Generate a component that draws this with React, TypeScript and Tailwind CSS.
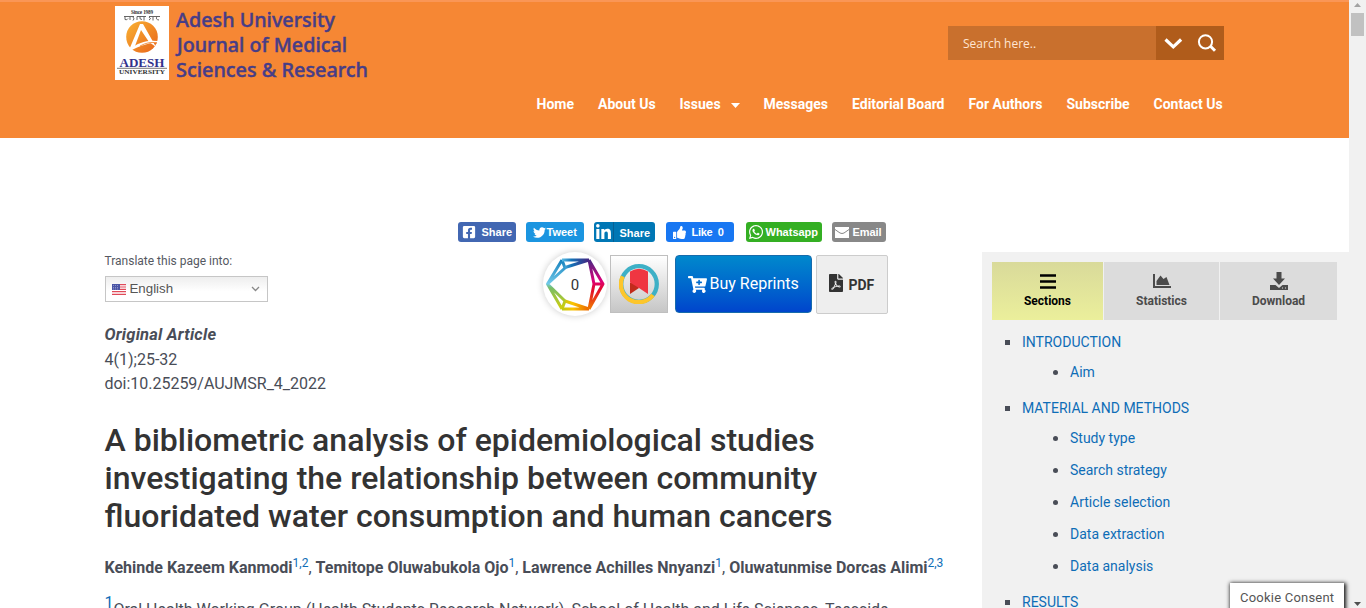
import React from "react";
import { FaCartPlus, FaFilePdf, FaThumbsUp, FaTwitter, FaWhatsapp, FaLinkedinIn, FaFacebookSquare } from "react-icons/fa";

const NAV = [
  { label: "Home", width: "w-[61.5px]" },
  { label: "About Us", width: "w-[81.5px]" },
  { label: "Issues", width: "w-[84px]", caret: true },
  { label: "Messages", width: "w-[88.5px]" },
  { label: "Editorial Board", width: "w-[116.5px]" },
  { label: "For Authors", width: "w-[98px]" },
  { label: "Subscribe", width: "w-[87px]" },
  { label: "Contact Us", width: "w-[70.5px]" },
];

function Crest() {
  return (
    <div className="h-[74px] w-[54px] shrink-0 bg-white">
      <svg width="54" height="74" viewBox="0 0 54 74">
        <defs>
          <linearGradient id="sun" x1="0" y1="0" x2="1" y2="1">
            <stop offset="0" stopColor="#f9b233" />
            <stop offset="1" stopColor="#e8641b" />
          </linearGradient>
        </defs>
        <text x="27" y="7.6" textAnchor="middle" fontSize="5.2" fontWeight="bold" fontFamily="Liberation Serif, serif" fill="#333" textLength="22">Since 1989</text>
        <path d="M9 10.500h10M22 10.500h9M34 10.500h11M10 10.500v3q2 1 3-1M15 11v3M18 11q2 2 0 3.500M22 10.500v3.500M25 10.500q-1 3 2 3M29 10.500v4M34 11q3 2 0 3M38 11v3.500M42 10.500q-2 3 2 3.500" stroke="#555" strokeWidth=".9" fill="none" />
        <circle cx="27" cy="31" r="15.8" fill="url(#sun)" />
        <path d="M14 44 25 18h3L41 41 34 36 26 24 20 40Z" fill="#fff" />
        <path d="M15 43C24 36 35 33 47 36 35 36 24 40 15 45Z" fill="#fff" />
        <path d="M25 40q9-5 17-3" stroke="#ef7e25" strokeWidth=".8" fill="none" />
        <text x="27" y="61" textAnchor="middle" fontSize="12" fontWeight="bold" fontFamily="Liberation Serif, serif" fill="#33318c" textLength="45" lengthAdjust="spacingAndGlyphs">ADESH</text>
        <path d="M2 62.3h50" stroke="#555" strokeWidth=".8" />
        <text x="27" y="68.300" textAnchor="middle" fontSize="6.4" fontWeight="bold" fontFamily="Liberation Serif, serif" fill="#333" textLength="46" lengthAdjust="spacingAndGlyphs">UNIVERSITY</text>
      </svg>
    </div>
  );
}

function Header() {
  return (
    <header className="flex h-[138px] justify-between border-t-2 border-[#fa9656] bg-[#f68734] pl-[115px] pr-[125px]">
      <div className="flex gap-[7px] pt-1">
        <Crest />
        <svg className="overflow-visible" width="196" height="78" viewBox="0 0 196 78" fontFamily="Noto Sans, sans-serif" fontSize="20.5" fontWeight="500" fill="#473d87" stroke="#473d87" strokeWidth=".45">
          <text x="0" y="20.500" textLength="159" lengthAdjust="spacingAndGlyphs">Adesh University</text>
          <text x="1" y="45.500" textLength="170" lengthAdjust="spacingAndGlyphs">Journal of Medical</text>
          <text x="0" y="70.500" textLength="192" lengthAdjust="spacingAndGlyphs">Sciences &amp; Research</text>
        </svg>
      </div>
      <div className="flex flex-col items-end pt-6">
        <div className="flex h-[34px] w-[276px]">
          <div className="flex w-52 items-center bg-[#c9702d] pl-[15px] pt-px font-['Open_Sans',sans-serif] text-[12px] text-[#ffe5d2]">Search here..</div>
          <div className="flex flex-1 items-center bg-[#b05c1b]">
            <svg width="68" height="34" viewBox="0 0 68 34" fill="none" stroke="#fff">
              <path d="m9.5 13.5 7.800 7.300 7.800-7.300" strokeWidth="3.2" />
              <circle cx="49.5" cy="15.8" r="6.6" strokeWidth="2" />
              <path d="m54.500 20.300 4.500 4.400" strokeWidth="3" />
            </svg>
          </div>
        </div>
        <nav className="mt-[34px] flex font-[Roboto,sans-serif] text-[14px] font-bold leading-5 text-white">
          {NAV.map((item) => (
            <div key={item.label} className={`flex shrink-0 items-center whitespace-nowrap ${item.width}`}>
              {item.label}
              {item.caret && <svg className="ml-[10px] mt-[2px]" width="9" height="5"><path d="M0 0h9L4.5 5Z" fill="#fff" /></svg>}
            </div>
          ))}
        </nav>
      </div>
    </header>
  );
}

function ShareRow() {
  const base = "flex h-5 shrink-0 items-center rounded-[3px] font-['Liberation_Sans',sans-serif] text-[11px] font-bold text-white whitespace-nowrap";
  return (
    <div className="flex h-5 pl-[353px]">
      <div className={`${base} w-[58px] bg-[#4267b2] pl-[4px]`}><FaFacebookSquare size={14} /><span className="ml-[6px]">Share</span></div>
      <div className={`${base} ml-[10px] w-[58px] bg-[#1b95e0] pl-[7px]`}><FaTwitter size={13} /><span className="ml-px">Tweet</span></div>
      <div className={`${base} ml-[10px] w-[61px] bg-[#0077b5]`}>
        <span className="flex h-5 w-5 items-center justify-center border-r border-[#066094]"><FaLinkedinIn size={17} /></span>
        <span className="ml-[6px] mt-[2px]">Share</span>
      </div>
      <div className={`${base} ml-[11px] w-[68px] bg-[#1877f2] pl-[7px]`}><FaThumbsUp size={13} /><span className="ml-[6px] tracking-[-0.3px]">Like&nbsp; 0</span></div>
      <div className={`${base} ml-3 w-[76px] bg-[#34af23] pl-[2px]`}><FaWhatsapp size={16} /><span className="ml-[2px]">Whatsapp</span></div>
      <div className={`${base} ml-[10px] w-[54px] bg-[#888] pl-[3px]`}>
        <svg width="14" height="11" viewBox="0 0 14 11"><path d="M0 0h14v11H0Z" fill="#fff" /><path d="m0 2.500 5 3.500q2 1 4 0L14 2.500" fill="none" stroke="#888" strokeWidth="1" /></svg>
        <span className="ml-1 tracking-[-0.1px]">Email</span>
      </div>
    </div>
  );
}

function DimensionsBadge() {
  return (
    <div className="mt-px flex h-[62px] w-16 shrink-0 items-center justify-center">
      <div className="h-16 w-16 shrink-0 rounded-full bg-white shadow-[0_0_7px_rgba(0,0,0,0.2)]">
        <svg width="64" height="64" viewBox="0 0 64 64" fill="none" strokeWidth="3" strokeLinejoin="round">
          <defs>
            <linearGradient id="topSide" x1="0" x2="1"><stop stopColor="#5abde5" /><stop offset=".35" stopColor="#1473b7" /><stop offset="1" stopColor="#432580" /></linearGradient>
            <linearGradient id="leftSide" x1="0" x2="0" y1="0" y2="1"><stop stopColor="#1681bd" /><stop offset=".48" stopColor="#70c9e9" /><stop offset=".57" stopColor="#78bd68" /><stop offset="1" stopColor="#d2cf08" /></linearGradient>
            <linearGradient id="rightSide" x1="0" x2="0" y1="0" y2="1"><stop stopColor="#472984" /><stop offset=".42" stopColor="#db007b" /><stop offset=".6" stopColor="#e30a2c" /><stop offset="1" stopColor="#ef7b00" /></linearGradient>
            <linearGradient id="baseSide" x1="0" x2="1"><stop stopColor="#bdc915" /><stop offset=".4" stopColor="#fac400" /><stop offset="1" stopColor="#eb6400" /></linearGradient>
          </defs>
          <path d="M19 8 4.500 32 19 57M4.500 32 22 16 19 8M4.500 32 22 49 19 57" stroke="url(#leftSide)" />
          <path d="M19 8.010 46 8M22 15.500 46 8" stroke="url(#topSide)" />
          <path d="M19 57 46 57.010M22 49 46 57" stroke="url(#baseSide)" />
          <path d="M46 8 60 32 46 57M46 8 51 32 46 57M51 32.010 60 32" stroke="url(#rightSide)" />
          <text x="32" y="37.500" textAnchor="middle" fill="#333" fontFamily="Roboto, sans-serif" fontSize="15">0</text>
        </svg>
      </div>
    </div>
  );
}

function ActionRow() {
  return (
    <div className="flex h-[62px] font-[Roboto,sans-serif]">
      <div className="w-[438px] shrink-0">
        <div className="pt-px text-[12px] leading-[17px] text-[#555962]">Translate this page into:</div>
        <div className="mt-[6px] flex h-[26px] w-[163px] items-center border border-[#c6c6c6] bg-linear-to-b from-[#eeeeee] to-white to-60% pl-[5px] font-['Liberation_Sans',sans-serif] text-[13.3px] text-[#555]">
          <svg width="16" height="13" viewBox="0 0 16 13"><path d="M1 1h14v11H1Z" fill="#fff" /><path d="M1 1.700h14M1 4h14M1 6.300h14M1 8.600h14M1 11.300h14" stroke="#e04a59" strokeWidth="1.2" /><path d="M1 1h8v6H1Z" fill="#4a55a5" /><path d="M2 2.500h6M2 4.500h6M2 6h6" stroke="#a6abd7" strokeDasharray="1 1" strokeWidth=".7" /></svg>
          <span className="ml-[3px]">English</span>
          <svg className="ml-auto mr-[7px]" width="9" height="6"><path d="m1 1 3.500 3.500L8 1" fill="none" stroke="#888" strokeWidth="1.3" /></svg>
        </div>
      </div>
      <DimensionsBadge />
      <div className="ml-[3px] mt-[3px] flex h-[58px] w-[58px] shrink-0 items-center justify-center border border-[#bfbfbf] bg-linear-to-b from-white to-[#c6c6c6]">
        <svg width="40" height="40" viewBox="0 0 40 40" fill="none">
          <circle cx="20" cy="20" r="17.8" stroke="#3db0c6" strokeWidth="4.3" />
          <path d="M3.800 12.400A17.800 17.800 0 0 0 34 31" stroke="#fdc62c" strokeWidth="4.3" />
          <path d="M11 19v11l9-6-4-7Z" fill="#c12b1c" />
          <path d="M11 7.500Q20 2 29 7.500V30L20 24 11 18.500Z" fill="#ef3642" />
        </svg>
      </div>
      <div className="ml-[7px] mt-[3px] flex h-[58px] w-[137px] shrink-0 items-center rounded border border-[#176bac] bg-linear-to-b from-[#0088cc] to-[#0044cc] pl-3 text-[16px] text-white">
        <FaCartPlus size={19} /><span className="ml-[3px] whitespace-nowrap">Buy Reprints</span>
      </div>
      <div className="ml-1 mt-[3px] flex h-[59px] w-[72px] shrink-0 items-center rounded-[2px] border border-[#ccc] bg-[#eee] pl-3 text-[14px] font-bold text-[#333]">
        <FaFilePdf className="-mt-[3px] h-[18px] w-[14px]" preserveAspectRatio="none" /><span className="ml-[6px] mt-px font-bold">PDF</span>
      </div>
    </div>
  );
}

const Sup = ({ children }: { children: React.ReactNode }) => (
  <sup className="relative top-[-6px] align-baseline text-[12px] leading-none text-[#0e6db7]">{children}</sup>
);

function Article() {
  return (
    <main className="w-[982px] shrink-0 pl-[104.5px] pt-[84px] font-[Roboto,sans-serif] text-[#494d57]">
      <ShareRow />
      <div className="mt-[10px]"><ActionRow /></div>
      <div className="mt-2 text-[16px] leading-6">
        <div className="h-[26px] text-[16.5px] font-bold italic leading-[25px] tracking-[0.22px]">Original Article</div>
        <div className="leading-6">4(1);25-32</div>
        <div className="tracking-[-0.02px]">doi:10.25259/AUJMSR_4_2022</div>
      </div>
      <h1 className="mt-[25px] whitespace-nowrap text-[32px] font-medium leading-[38px] text-[#333]">
        <span className="block">A bibliometric analysis of epidemiological studies</span>
        <span className="block">investigating the relationship between community</span>
        <span className="block">fluoridated water consumption and human cancers</span>
      </h1>
      <div className="mt-[21px] h-6 whitespace-nowrap text-[16px] leading-6">
        <b className="font-bold">Kehinde Kazeem Kanmodi</b><Sup>1,2</Sup>, <b className="font-bold">Temitope Oluwabukola Ojo</b><Sup>1</Sup>, <b className="font-bold">Lawrence Achilles Nnyanzi</b><Sup>1</Sup>, <b className="font-bold">Oluwatunmise Dorcas Alimi</b><Sup>2,3</Sup>
      </div>
      <div className="mt-[18px] h-6 whitespace-nowrap text-[16px] leading-6 tracking-[-0.01px]">
        <sup className="relative top-[-7px] align-baseline text-[16px] leading-none text-[#0e6db7]">1</sup>Oral Health Working Group (Health Students Research Network), School of Health and Life Sciences, Teesside
      </div>
    </main>
  );
}

const SECTIONS = [
  { title: "INTRODUCTION", items: ["Aim"] },
  { title: "MATERIAL AND METHODS", items: ["Study type", "Search strategy", "Article selection", "Data extraction", "Data analysis"] },
  { title: "RESULTS", items: [] },
];

function Sidebar() {
  return (
    <aside className="mt-[114px] h-[356px] w-[367px] shrink-0 bg-[#f1f1f1] px-[10px] pt-[10px] font-[Roboto,sans-serif]">
      <div className="flex h-[58px] gap-px text-[12px] font-bold leading-4 text-[#4b4b4b]">
        <div className="flex w-[111px] flex-col items-center bg-linear-to-b from-[#d9da9a] to-[#ebef9b] pt-3 text-black">
          <svg width="16" height="15"><path d="M0 1.500h16M0 7.500h16M0 13.500h16" stroke="currentColor" strokeWidth="2.4" /></svg>
          <span className="mt-1">Sections</span>
        </div>
        <div className="flex w-[115px] flex-col items-center bg-[#dcdcdc] pt-3">
          <svg width="18" height="14" viewBox="0 0 18 14"><path d="M0 0h2v12h16v2H0Z" fill="currentColor" /><path d="M3.500 11V7L7.500 1.500l3 3.500 3-2 3 8Z" fill="currentColor" /></svg>
          <span className="mt-[5px]">Statistics</span>
        </div>
        <div className="flex w-[117px] flex-col items-center bg-[#dcdcdc] pt-[10px]">
          <svg width="18" height="18" viewBox="0 0 18 18" fill="currentColor"><path d="M6.500 0h5v6.500H15l-6 6.500-6-6.500h3.500Z" /><path fillRule="evenodd" d="M0 13h5.500L9 16 12.500 13H18v5H0Zm12 2.500v1h1v-1Zm3 0v1h1v-1Z" /></svg>
          <span className="mt-[3px]">Download</span>
        </div>
      </div>
      <ul className="pt-[11px] text-[14px] text-[#494d57]">
        {SECTIONS.map((section) => (
          <li key={section.title}>
            <div className="flex h-[22px] items-center"><i className="ml-[13px] mr-3 h-[5px] w-[5px] bg-current" /><a className="text-[#0e6db7]">{section.title}</a></div>
            <ul className="pb-[9px] pt-[3px]">
              {section.items.map((item) => (
                <li key={item} className="flex h-8 items-center"><i className="ml-[61px] mr-3 h-[5px] w-[5px] rounded-full bg-current" /><a className="text-[#0e6db7]">{item}</a></li>
              ))}
            </ul>
          </li>
        ))}
      </ul>
    </aside>
  );
}

export default function App() {
  return (
    <div className="relative flex h-[608px] w-[1366px] overflow-hidden bg-white">
      <div className="w-[1349px] shrink-0">
        <Header />
        <div className="flex h-[470px] overflow-hidden"><Article /><Sidebar /></div>
      </div>
      <div className="flex w-[17px] flex-col items-center justify-between bg-[#f1f1f1] pb-[2px] pt-[3px]">
        <div className="flex flex-col items-center">
          <svg width="7" height="4"><path d="M0 4h7L3.500 0Z" fill="#a3a3a3" /></svg>
          <div className="mt-[6px] h-[23px] w-[13px] bg-[#c1c1c1]" />
        </div>
        <svg width="7" height="4"><path d="M0 0h7L3.500 4Z" fill="#505050" /></svg>
      </div>
      <div className="absolute left-[1230px] top-[583px] h-[30px] w-[114px] bg-white pl-[10px] pt-[5px] font-[Roboto,sans-serif] text-[13px] leading-5 tracking-[0.22px] text-[#555] shadow-[1px_1px_4px_1px_#111]">Cookie Consent</div>
    </div>
  );
}
